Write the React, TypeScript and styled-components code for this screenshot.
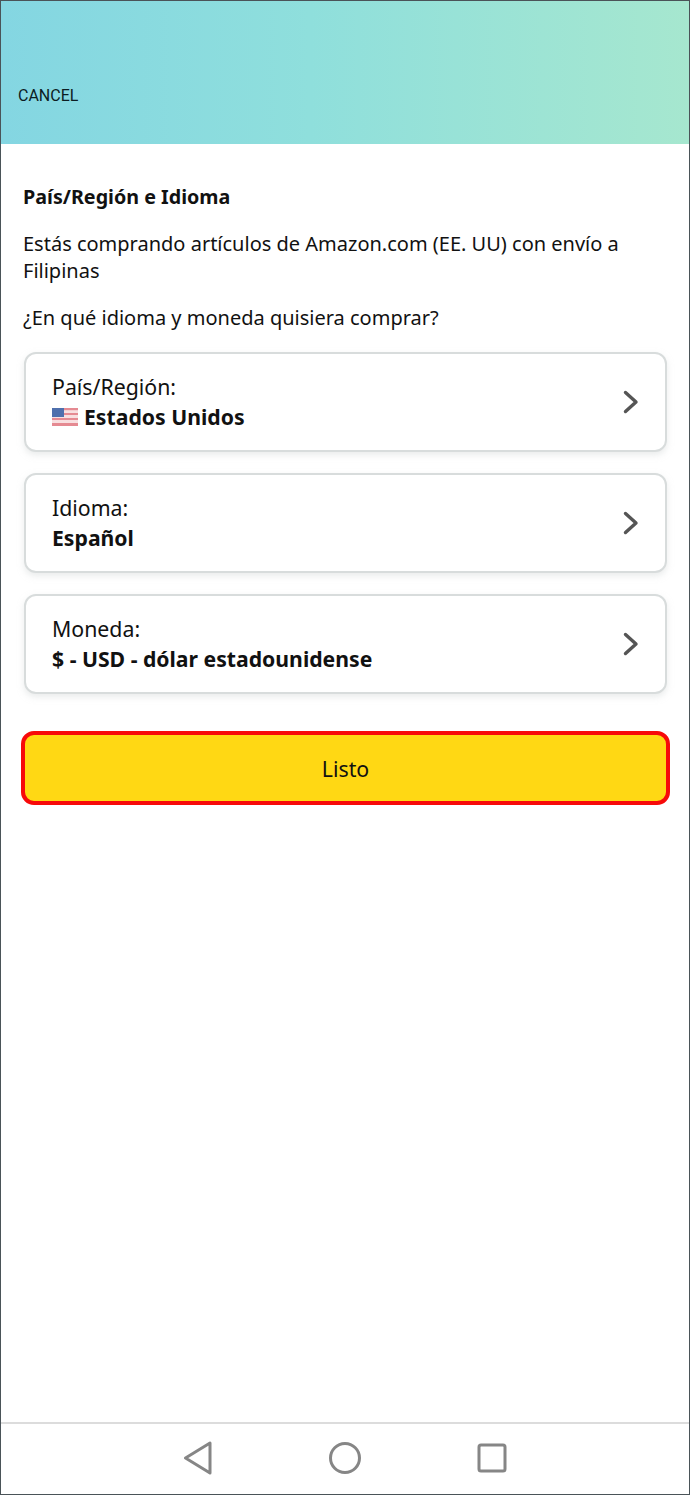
import React from 'react';
import styled, { createGlobalStyle } from 'styled-components';

const GlobalStyle = createGlobalStyle`
    html, body {
        margin: 0;
        padding: 0;
        background: #fff;
    }
    * {
        box-sizing: border-box;
    }
`

const Screen = styled.div`
    display: flex;
    flex-direction: column;
    width: 690px;
    height: 1495px;
    border: 1px solid #4a5358;
    font-family: "Noto Sans", sans-serif;
    color: #111;
    background: #fff;
`

const Header = styled.header`
    display: flex;
    align-items: flex-end;
    height: 143px;
    padding: 0 0 39px 17px;
    background: linear-gradient(90deg, #84d6e2 0%, #8fdfdc 45%, #a6e7cf 100%);
`

const Cancel = styled.span`
    font-family: "Roboto", sans-serif;
    font-weight: 400;
    font-size: 16px;
    line-height: 18px;
    color: #0c1c22;
`

const Main = styled.main`
    display: flex;
    flex-direction: column;
    flex: 1;
    padding: 39px 22px 0 22px;
`

const Title = styled.h1`
    margin: 0 0 19px;
    font-size: 19.7px;
    line-height: 28px;
    font-weight: 700;
    color: #111;
`

const Paragraph = styled.p`
    margin: 0 0 20px;
    font-size: 20px;
    line-height: 27px;
    color: #111;
`

const Options = styled.div`
    display: flex;
    flex-direction: column;
    gap: 21px;
    margin-top: 1px;
`

const Card = styled.div`
    display: flex;
    align-items: center;
    justify-content: space-between;
    height: 100px;
    margin: 0 0 0 1px;
    padding: 0 26px 0 26px;
    border: 2px solid #d8dcdc;
    border-radius: 12px;
    background: #fff;
    box-shadow: 0 3px 6px rgba(213, 217, 217, 0.5);
`

const CardText = styled.div`
    display: flex;
    flex-direction: column;
`

const Label = styled.span`
    font-size: 21.3px;
    line-height: 30px;
`

const Value = styled.span`
    display: flex;
    align-items: center;
    gap: 6px;
    font-size: 21.2px;
    line-height: 30px;
    font-weight: 700;
`

const Listo = styled.button`
    height: 74px;
    margin: 37px 0 0 -2px;
    width: 649px;
    border: 4px solid #f70a0a;
    border-radius: 13px;
    background: #ffd814;
    font-family: inherit;
    font-size: 21.3px;
    color: #111;
`

const NavBar = styled.nav`
    display: flex;
    align-items: center;
    justify-content: center;
    gap: 116px;
    height: 72px;
    padding: 0 0 2px 0;
    border-top: 2px solid #dcdcdc;
    background: #fff;
`

const Chevron = () => (
    <svg width="16" height="24" viewBox="0 0 16 24" fill="none">
        <path d="M2.5 2.5 L13 12 L2.5 21.5" stroke="#555" strokeWidth="3.4" strokeLinecap="round" strokeLinejoin="round" />
    </svg>
)

const UsFlag = () => (
    <svg width="26" height="18" viewBox="0 0 26 18">
        <rect width="26" height="18" fill="#f8dfe0" />
        <g fill="#e58a92">
            <rect y="0" width="26" height="2.2" />
            <rect y="5" width="26" height="2" />
            <rect y="10" width="26" height="2" />
            <rect y="15" width="26" height="3" />
        </g>
        <rect width="12" height="9" fill="#4f70ad" />
    </svg>
)

const BackIcon = () => (
    <svg width="30" height="34" viewBox="0 0 30 34" fill="none">
        <path d="M27 2 L27 32 L2.5 17 Z" stroke="#868686" strokeWidth="3" strokeLinejoin="round" />
    </svg>
)

const HomeIcon = () => (
    <svg width="32" height="32" viewBox="0 0 32 32" fill="none">
        <circle cx="16" cy="16" r="14.5" stroke="#868686" strokeWidth="3" />
    </svg>
)

const RecentsIcon = () => (
    <svg width="30" height="30" viewBox="0 0 30 30" fill="none">
        <rect x="2" y="2" width="26" height="26" rx="2" stroke="#868686" strokeWidth="3" />
    </svg>
)

const App = () => {
    return (
        <Screen>
            <GlobalStyle />
            <Header>
                <Cancel>CANCEL</Cancel>
            </Header>
            <Main>
                <Title>País/Región e Idioma</Title>
                <Paragraph>Estás comprando artículos de Amazon.com (EE. UU) con envío a Filipinas</Paragraph>
                <Paragraph>¿En qué idioma y moneda quisiera comprar?</Paragraph>
                <Options>
                    <Card>
                        <CardText>
                            <Label>País/Región:</Label>
                            <Value><UsFlag />Estados Unidos</Value>
                        </CardText>
                        <Chevron />
                    </Card>
                    <Card>
                        <CardText>
                            <Label>Idioma:</Label>
                            <Value>Español</Value>
                        </CardText>
                        <Chevron />
                    </Card>
                    <Card>
                        <CardText>
                            <Label>Moneda:</Label>
                            <Value>$ - USD - dólar estadounidense</Value>
                        </CardText>
                        <Chevron />
                    </Card>
                </Options>
                <Listo>Listo</Listo>
            </Main>
            <NavBar>
                <BackIcon />
                <HomeIcon />
                <RecentsIcon />
            </NavBar>
        </Screen>
    );
}

export default App;
